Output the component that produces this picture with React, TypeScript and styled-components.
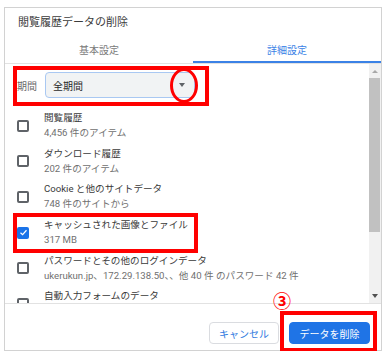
import React from "react";
import styled, { createGlobalStyle } from "styled-components";

const Global = createGlobalStyle`
  html, body { margin: 0; padding: 0; background: #fff; }
  body { font-family: Roboto, "Noto Sans CJK JP", sans-serif; }
`;

const Page = styled.div`
  padding: 7px 0 0 4px;
`;

const Dialog = styled.div`
  width: 378px;
  height: 344px;
  box-sizing: border-box;
  border: 1px solid #d2d2d2;
  display: flex;
  flex-direction: column;
  background: #fff;
`;

const Title = styled.h1`
  margin: 0;
  height: 29px;
  box-sizing: border-box;
  padding: 8px 13px 0;
  font-size: 11px;
  line-height: 14px;
  font-weight: 400;
  color: #3c3c3c;
`;

const TabBar = styled.div`
  display: flex;
  height: 27px;
  box-sizing: border-box;
  border-bottom: 1px solid #e2e2e2;
`;

const Tab = styled.div<{ $active?: boolean }>`
  flex: 1;
  display: flex;
  align-items: center;
  justify-content: center;
  padding-bottom: 2px;
  font-size: 10px;
  color: ${(p) => (p.$active ? "#3b82e6" : "#7a7a7a")};
  box-shadow: ${(p) => (p.$active ? "inset 0 -2px 0 #3b82e6" : "none")};
`;

const Body = styled.div`
  flex: 1;
  display: flex;
  min-height: 0;
`;

const Content = styled.div`
  flex: 1;
  overflow: hidden;
  padding-left: 12px;
`;

const PeriodRow = styled.div`
  position: relative;
  margin-top: 8px;
  height: 26px;
  display: flex;
  align-items: center;
`;

const PeriodLabel = styled.span`
  width: 28px;
  font-size: 10px;
  color: #6b6b6b;
`;

const Select = styled.div`
  width: 150px;
  height: 26px;
  box-sizing: border-box;
  border: 1px solid #a9c8f2;
  border-radius: 4px;
  background: #f1f3f4;
  display: flex;
  align-items: center;
  justify-content: space-between;
  padding: 0 9px 0 7px;
  font-size: 10px;
  color: #2a2a2a;
`;

const Caret = styled.span<{ $color?: string }>`
  width: 0;
  height: 0;
  border-left: 3.5px solid transparent;
  border-right: 3.5px solid transparent;
  border-top: 4px solid ${(p) => p.$color ?? "#5f6368"};
`;

const CaretUp = styled.span<{ $color?: string }>`
  width: 0;
  height: 0;
  border-left: 3px solid transparent;
  border-right: 3px solid transparent;
  border-bottom: 3px solid ${(p) => p.$color ?? "#a3a3a3"};
`;

const Highlight = styled.span`
  position: absolute;
  box-sizing: border-box;
  border: 4px solid #ff0000;
  pointer-events: none;
`;

const Ellipse = styled.span`
  position: absolute;
  box-sizing: border-box;
  border: 3px solid #ff0000;
  border-radius: 50%;
  pointer-events: none;
`;

const List = styled.div`
  margin-top: 10px;
`;

const Item = styled.div`
  position: relative;
  height: 35.6px;
  display: flex;
  align-items: center;
`;

const Box = styled.span<{ $checked?: boolean }>`
  flex: none;
  width: 12px;
  height: 12px;
  box-sizing: border-box;
  border-radius: 2px;
  border: ${(p) => (p.$checked ? "none" : "2px solid #5f6368")};
  background: ${(p) => (p.$checked ? "#1a73e8" : "transparent")};
  display: flex;
  align-items: center;
  justify-content: center;
`;

const ItemText = styled.div`
  margin-left: 15px;
  display: flex;
  flex-direction: column;
`;

const ItemTitle = styled.span`
  font-size: 9.6px;
  line-height: 14px;
  color: #3a3a3a;
  white-space: nowrap;
`;

const ItemSub = styled.span`
  font-size: 9.6px;
  line-height: 15px;
  color: #707070;
  white-space: nowrap;
`;

const Scrollbar = styled.div`
  width: 12px;
  background: #f1f1f1;
  display: flex;
  flex-direction: column;
`;

const ScrollButton = styled.div`
  height: 14px;
  display: flex;
  align-items: center;
  justify-content: center;
`;

const Thumb = styled.div`
  height: 154px;
  margin: 0 1px 0 0;
  background: #c1c1c1;
`;

const Spacer = styled.div`
  flex: 1;
`;

const Footer = styled.div`
  height: 47px;
  box-sizing: border-box;
  border-top: 1px solid #e2e2e2;
  display: flex;
  justify-content: flex-end;
  align-items: flex-start;
  gap: 10px;
  padding: 18px 11px 0 0;
`;

const Button = styled.button<{ $primary?: boolean }>`
  height: 22px;
  box-sizing: border-box;
  padding: 0;
  white-space: nowrap;
  border-radius: 4px;
  font-family: inherit;
  font-size: 10px;
  font-weight: 400;
  border: 1px solid ${(p) => (p.$primary ? "#1f74e6" : "#dadce0")};
  background: ${(p) => (p.$primary ? "#1f74e6" : "#fff")};
  color: ${(p) => (p.$primary ? "#fff" : "#2f7ae0")};
`;

const CancelButton = styled(Button)`
  width: 70px;
`;

const DeleteButton = styled(Button)`
  width: 81px;
`;

const ButtonWrap = styled.div`
  position: relative;
`;

const Step = styled.span`
  position: absolute;
  left: -16px;
  top: -31px;
  font-size: 18px;
  line-height: 18px;
  font-weight: 700;
  color: #ff0000;
  font-family: "Noto Sans CJK JP", sans-serif;
`;

const Check = () => (
  <svg width="9" height="9" viewBox="0 0 12 12">
    <path d="M2 6.3 L4.8 9 L10 3" fill="none" stroke="#fff" strokeWidth="1.6" />
  </svg>
);

const items = [
  { title: "閲覧履歴", sub: "4,456 件のアイテム" },
  { title: "ダウンロード履歴", sub: "202 件のアイテム" },
  { title: "Cookie と他のサイトデータ", sub: "748 件のサイトから" },
  { title: "キャッシュされた画像とファイル", sub: "317 MB", checked: true, mark: true },
  { title: "パスワードとその他のログインデータ", sub: "ukerukun.jp、172.29.138.50、、他 40 件 のパスワード 42 件" },
  { title: "自動入力フォームのデータ", sub: "" },
];

export default function App() {
  return (
    <Page>
      <Global />
      <Dialog>
        <Title>閲覧履歴データの削除</Title>
        <TabBar>
          <Tab>基本設定</Tab>
          <Tab $active>詳細設定</Tab>
        </TabBar>
        <Body>
          <Content>
            <PeriodRow>
              <PeriodLabel>期間</PeriodLabel>
              <Select>
                <span>全期間</span>
                <Caret />
              </Select>
              <Highlight style={{ left: -4, top: -6, width: 196, height: 40 }} />
              <Ellipse style={{ left: 153, top: -4, width: 28, height: 35 }} />
            </PeriodRow>
            <List>
              {items.map((it) => (
                <Item key={it.title}>
                  <Box $checked={it.checked}>{it.checked && <Check />}</Box>
                  <ItemText>
                    <ItemTitle>{it.title}</ItemTitle>
                    <ItemSub>{it.sub || "\u00a0"}</ItemSub>
                  </ItemText>
                  {it.mark && <Highlight style={{ left: -4, top: -2, width: 185, height: 40 }} />}
                </Item>
              ))}
            </List>
          </Content>
          <Scrollbar>
            <ScrollButton>
              <CaretUp $color="#a8a8a8" />
            </ScrollButton>
            <Thumb />
            <Spacer />
            <ScrollButton>
              <Caret $color="#505050" />
            </ScrollButton>
          </Scrollbar>
        </Body>
        <Footer>
          <CancelButton>キャンセル</CancelButton>
          <ButtonWrap>
            <DeleteButton $primary>データを削除</DeleteButton>
            <Highlight style={{ left: -9, top: -11, width: 97, height: 41 }} />
            <Step>③</Step>
          </ButtonWrap>
        </Footer>
      </Dialog>
    </Page>
  );
}
